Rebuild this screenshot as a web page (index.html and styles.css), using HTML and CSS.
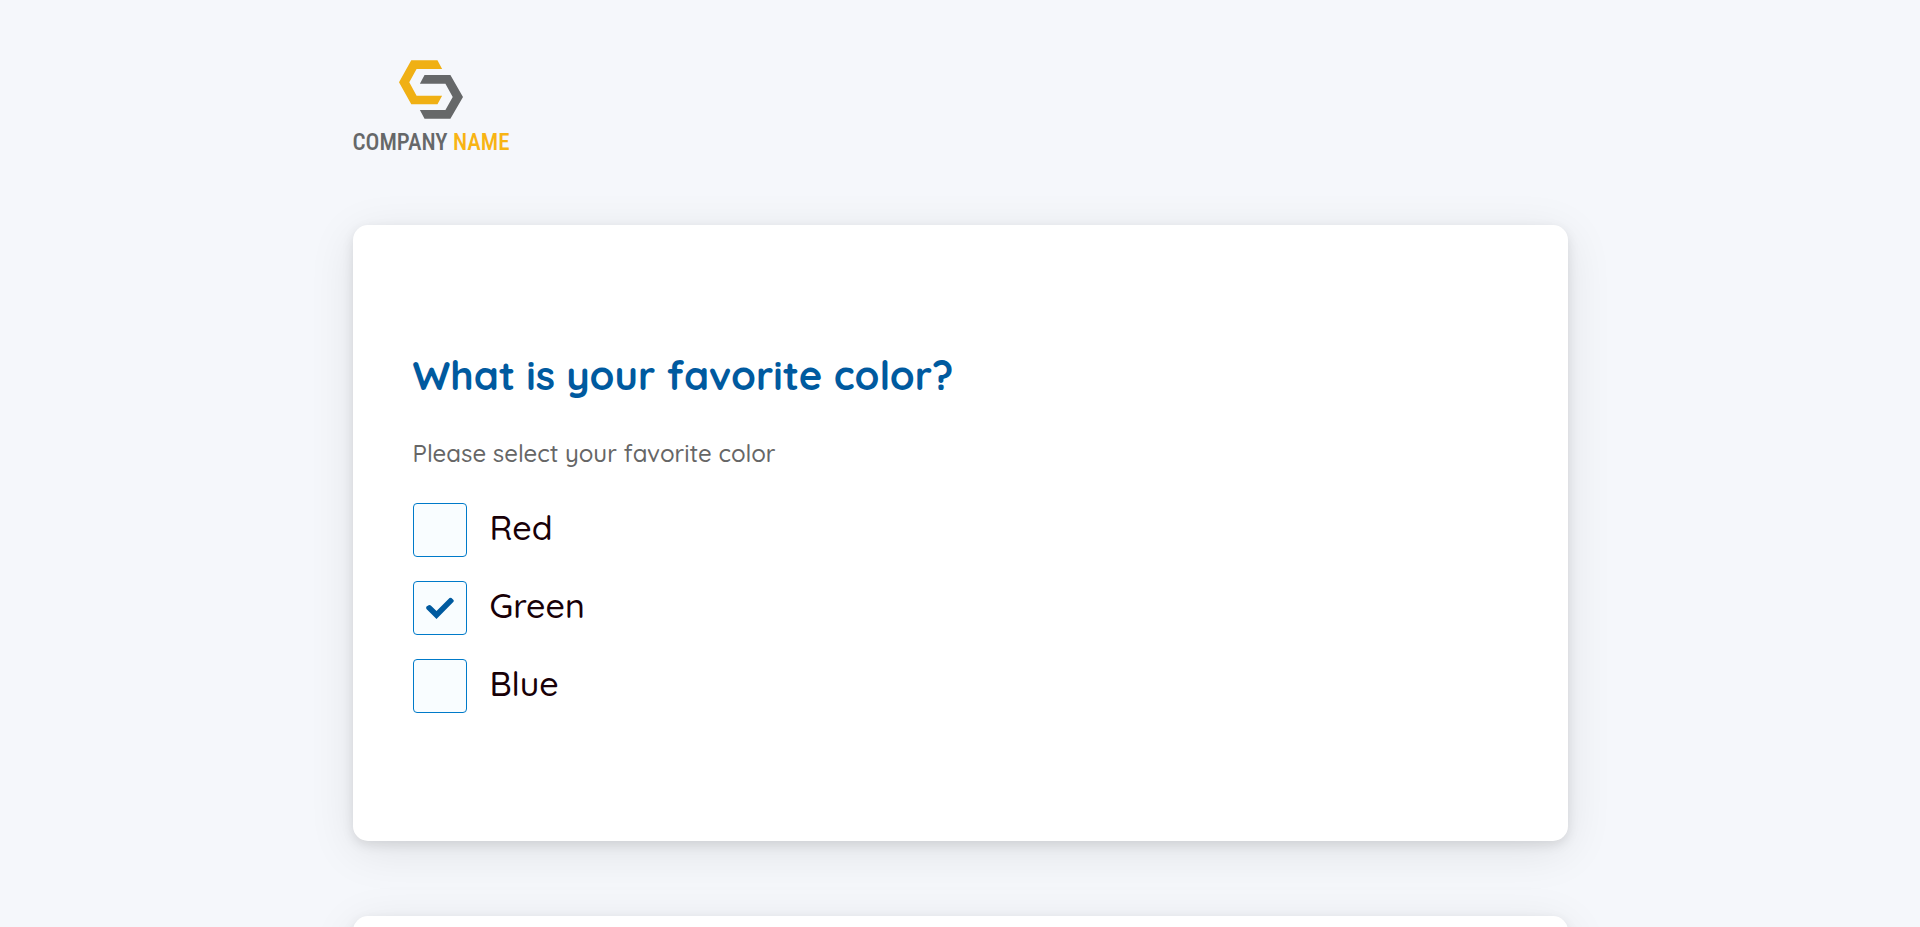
FILE: index.html
```html
<!DOCTYPE html>
<html lang="en">
<head>
<meta charset="utf-8">
<meta name="viewport" content="width=device-width, initial-scale=1">
<title>Survey</title>
<link rel="stylesheet" href="styles.css">
</head>
<body>
<svg width="0" height="0" class="defs" aria-hidden="true">
  <symbol id="tick" viewBox="0 0 54 54"><path d="M13.500 25.500Q12.500 27 13.700 28.200L23.500 38L40.500 20.800Q41.300 19.700 40.300 18.700L38.500 17Q37.500 16.300 36.500 17L23.500 30L17.800 24.500Q16.700 23.600 15.600 24.300Z"/></symbol>
</svg>
<div class="page">
  <header class="header">
    <div class="logo">
      <svg class="logo-mark" viewBox="175 60 193 177" aria-hidden="true">
        <path fill="#f0b014" d="M212 60H291L305 87H228L206 127L228 167H305L291 193H212L175 127Z"/>
        <path fill="#666869" d="M252 105H330L368 171L330 237H252L238 210H315L337 171L315 131H238Z"/>
      </svg>
      <div class="logo-text">COMPANY <span class="logo-accent">NAME</span></div>
    </div>
  </header>
  <main class="cards">
    <section class="card">
      <h1 class="title">What is your favorite color?</h1>
      <p class="hint">Please select your favorite color</p>
      <div class="options">
        <label class="option">
          <span class="check"><input class="box" type="checkbox" name="color" value="red"><svg class="tick" aria-hidden="true"><use href="#tick"/></svg></span>
          <span class="option-text">Red</span>
        </label>
        <label class="option">
          <span class="check"><input class="box" type="checkbox" name="color" value="green" checked><svg class="tick" aria-hidden="true"><use href="#tick"/></svg></span>
          <span class="option-text">Green</span>
        </label>
        <label class="option">
          <span class="check"><input class="box" type="checkbox" name="color" value="blue"><svg class="tick" aria-hidden="true"><use href="#tick"/></svg></span>
          <span class="option-text">Blue</span>
        </label>
      </div>
    </section>
    <section class="card"></section>
  </main>
</div>
</body>
</html>
```

FILE: styles.css
```css
* { box-sizing: border-box; }
html { background: #f5f7fb; }
body {
  margin: 0;
  height: 100vh;
  overflow: hidden;
  font-family: Quicksand, Lato, sans-serif;
  font-weight: 500;
}
.defs { display: none; }
.page {
  max-width: 1215px;
  margin: 0 auto;
  padding-top: 60px;
}
.header { display: flex; margin-bottom: 70px; }
.logo {
  display: flex;
  flex-direction: column;
  align-items: center;
  gap: 12px;
}
.logo-mark { width: 64px; height: 59px; }
.logo-text {
  font: 500 23px/24px "Roboto Condensed", "Liberation Sans Narrow", sans-serif;
  color: #666869;
}
.logo-accent { color: #f8b414; }
.cards { display: flex; flex-direction: column; gap: 75px; }
.card {
  min-height: 616px;
  padding: 120px 60px;
  background: #fff;
  border-radius: 15px;
  box-shadow: 0 4px 12px rgba(0, 0, 0, .1), 0 10px 48px rgba(0, 0, 0, .09);
}
.title {
  margin: 0 0 30px;
  font-size: 40px;
  line-height: 60px;
  font-weight: 700;
  color: #005a9f;
}
.hint {
  margin: 0 0 32px;
  font-size: 24px;
  line-height: 36px;
  color: #666;
}
.options { display: flex; flex-direction: column; gap: 24px; }
.option { display: flex; align-items: center; gap: 23px; align-self: flex-start; cursor: pointer; }
.check { display: grid; }
.box, .tick { grid-area: 1 / 1; width: 54px; height: 54px; }
.box {
  appearance: none;
  margin: 0;
  border: 1px solid #007ac9;
  border-radius: 4px;
  background: #f9fdff;
}
.tick { visibility: hidden; fill: #005a9f; pointer-events: none; }
.box:checked + .tick { visibility: visible; }
.option-text {
  padding-bottom: 4px;
  font-size: 34px;
  line-height: 44px;
  color: #180007;
}
```
